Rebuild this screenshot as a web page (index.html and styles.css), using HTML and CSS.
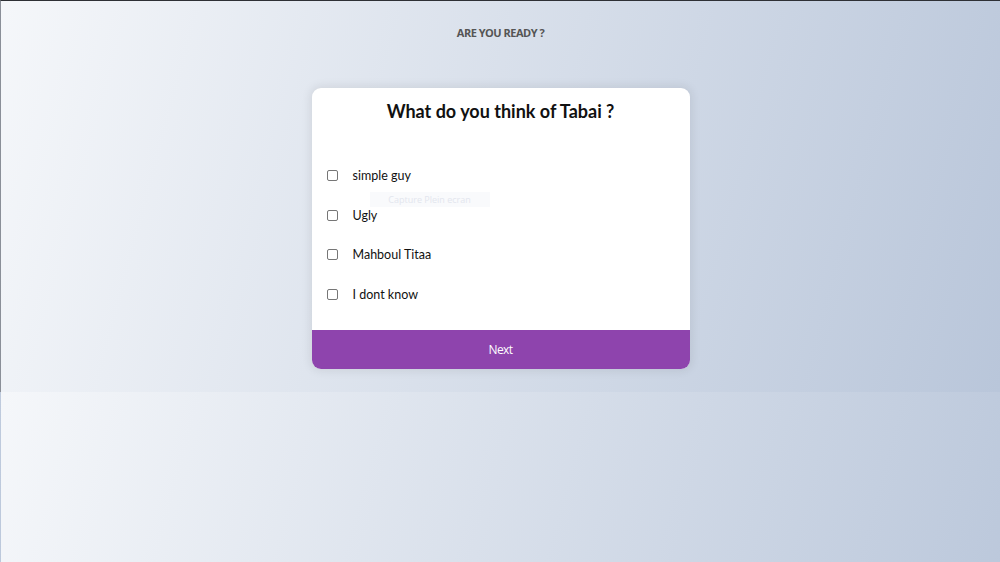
FILE: index.html
```html
<!DOCTYPE html>
<html lang="en">
<head>
<meta charset="utf-8">
<title>Quiz</title>
<link rel="stylesheet" href="styles.css">
</head>
<body>
<header class="top">
  <h1 class="kicker">ARE YOU READY ?</h1>
</header>
<main class="card">
  <div class="card-body">
    <h2 class="question">What do you think of Tabai ?</h2>
    <ul class="answers">
      <li class="answer"><span class="box"></span><span class="label">simple guy</span></li>
      <li class="answer"><span class="box"></span><span class="label">Ugly</span></li>
      <li class="answer"><span class="box"></span><span class="label">Mahboul Titaa</span></li>
      <li class="answer"><span class="box"></span><span class="label">I dont know</span></li>
    </ul>
  </div>
  <button class="next">Next</button>
  <div class="tooltip">Capture Plein ecran</div>
</main>
</body>
</html>
```
FILE: styles.css
```css
html {
  background: linear-gradient(105deg, #f5f7fa 0%, #b9c6da 100%);
  border-top: 1px solid #2e3035;
  border-left: 1px solid #8a8f98;
}
body {
  margin: 0;
  padding: 0 0 23px;
  font-family: "Lato", "Noto Sans", sans-serif;
}
.top {
  padding-top: 23px;
  text-align: center;
}
.kicker {
  margin: 0;
  font-family: "Open Sans", sans-serif;
  font-size: 11px;
  line-height: 18px;
  font-weight: 700;
  color: #555;
  letter-spacing: -0.5px;
}
.card {
  position: relative;
  width: 378px;
  margin: 46px auto 0;
  background: #fff;
  border-radius: 9px;
  overflow: hidden;
  box-shadow: 0 0 10px 2px rgba(0, 0, 0, 0.08);
}
.card-body {
  padding: 10px 15px 16px;
}
.question {
  margin: 0;
  text-align: center;
  font-size: 18px;
  line-height: 26px;
  font-weight: 700;
  color: #111;
}
.answers {
  list-style: none;
  margin: 32px 0 0;
  padding: 0;
}
.answer {
  display: flex;
  align-items: center;
  height: 39.5px;
  font-size: 12.5px;
  color: #111;
}
.box {
  width: 9px;
  height: 9px;
  border: 1px solid #767676;
  border-radius: 2px;
  margin-right: 15px;
}
.next {
  display: block;
  width: 100%;
  height: 39px;
  border: 0;
  background: #8e44ad;
  color: #fff;
  font-family: "Open Sans", sans-serif;
  font-size: 12px;
  letter-spacing: -0.6px;
}
.tooltip {
  position: absolute;
  left: 58px;
  top: 104px;
  width: 120px;
  height: 15px;
  background: #f9fafc;
  color: #e3e6ee;
  font-family: "Open Sans", sans-serif;
  font-size: 9px;
  line-height: 15px;
  text-align: center;
}
```
